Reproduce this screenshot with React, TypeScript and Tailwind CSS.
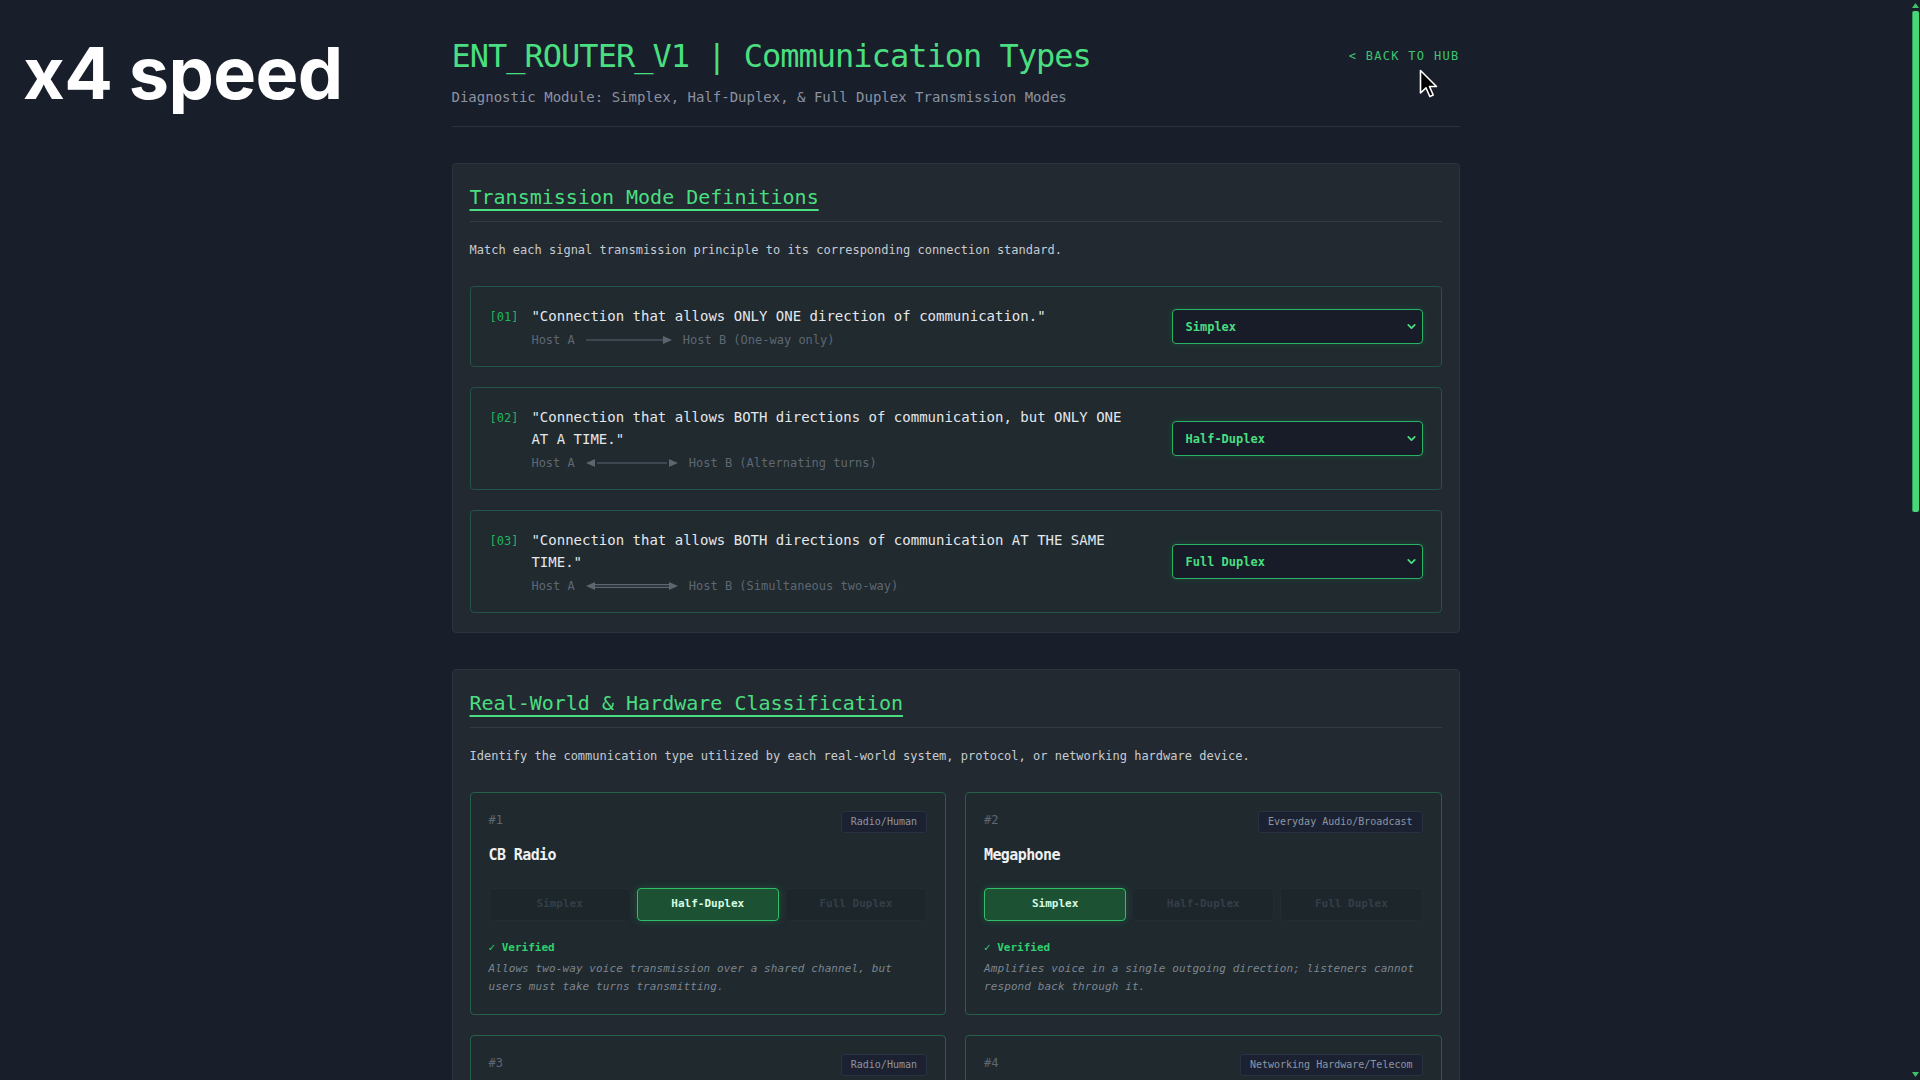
import { ChevronDown } from "lucide-react";

type Mode = "Simplex" | "Half-Duplex" | "Full Duplex";

const MODES: Mode[] = ["Simplex", "Half-Duplex", "Full Duplex"];

type Definition = {
  id: string;
  lines: string;
  kind: "one" | "half" | "full";
  note: string;
  value: Mode;
};

const definitions: Definition[] = [
  {
    id: "01",
    lines: "\"Connection that allows ONLY ONE direction of communication.\"",
    kind: "one",
    note: "Host B (One-way only)",
    value: "Simplex",
  },
  {
    id: "02",
    lines:
      "\"Connection that allows BOTH directions of communication, but ONLY ONE AT A TIME.\"",
    kind: "half",
    note: "Host B (Alternating turns)",
    value: "Half-Duplex",
  },
  {
    id: "03",
    lines:
      "\"Connection that allows BOTH directions of communication AT THE SAME TIME.\"",
    kind: "full",
    note: "Host B (Simultaneous two-way)",
    value: "Full Duplex",
  },
];

type Device = {
  n: number;
  name: string;
  tag: string;
  picked?: Mode;
  note?: string;
};

const devices: Device[] = [
  {
    n: 1,
    name: "CB Radio",
    tag: "Radio/Human",
    picked: "Half-Duplex",
    note: "Allows two-way voice transmission over a shared channel, but users must take turns transmitting.",
  },
  {
    n: 2,
    name: "Megaphone",
    tag: "Everyday Audio/Broadcast",
    picked: "Simplex",
    note: "Amplifies voice in a single outgoing direction; listeners cannot respond back through it.",
  },
  { n: 3, name: "Walkie-Talkie", tag: "Radio/Human" },
  { n: 4, name: "Modern Ethernet Switch", tag: "Networking Hardware/Telecom" },
  { n: 5, name: "Landline Telephone Call", tag: "Everyday Audio/Broadcast" },
  { n: 6, name: "Legacy Network Hub", tag: "Networking Hardware/Telecom" },
  { n: 7, name: "Television Broadcast", tag: "Everyday Audio/Broadcast" },
  { n: 8, name: "Computer Keyboard", tag: "Peripheral/Input" },
  { n: 9, name: "Cellular Phone (VoLTE)", tag: "Radio/Human" },
  { n: 10, name: "Wi-Fi Shared Medium", tag: "Networking Hardware/Telecom" },
];

function LinkArrow({ kind }: { kind: Definition["kind"] }) {
  if (kind === "one") {
    return (
      <svg width="86" height="10" viewBox="0 0 86 10" className="shrink-0">
        <line x1="0" y1="5" x2="78" y2="5" stroke="#5d6570" strokeWidth="1.2" />
        <polygon points="77,1 86,5 77,9" fill="#5d6570" />
      </svg>
    );
  }
  if (kind === "half") {
    return (
      <svg width="92" height="10" viewBox="0 0 92 10" className="shrink-0">
        <polygon points="9,1 0,5 9,9" fill="#5d6570" />
        <line x1="11" y1="5" x2="81" y2="5" stroke="#5d6570" strokeWidth="1.2" />
        <polygon points="83,1 92,5 83,9" fill="#5d6570" />
      </svg>
    );
  }
  return (
    <svg width="92" height="10" viewBox="0 0 92 10" className="shrink-0">
      <polygon points="9,1 0,5 9,9" fill="#5d6570" />
      <line x1="9" y1="3.6" x2="83" y2="3.6" stroke="#5d6570" strokeWidth="1.3" />
      <line x1="9" y1="6.4" x2="83" y2="6.4" stroke="#5d6570" strokeWidth="1.3" />
      <polygon points="83,1 92,5 83,9" fill="#5d6570" />
    </svg>
  );
}

function ModeSelect({ value }: { value: Mode }) {
  return (
    <div className="flex h-[35px] w-[251px] shrink-0 items-center justify-between rounded-[4px] border border-[#27b463] bg-[#171c28] pl-[13px] pr-[4px] shadow-[0_0_6px_rgba(34,197,94,0.18)]">
      <span className="text-[12px] font-bold text-[#4ade80]">{value}</span>
      <ChevronDown size={13} strokeWidth={3.2} color="#4ade80" />
    </div>
  );
}

function SectionHeading({ children }: { children: string }) {
  return (
    <div className="border-b border-[#323a44] pb-[10px]">
      <h2 className="text-[20px] leading-[28px] text-[#4ade80] underline decoration-2 underline-offset-[5px]">
        {children}
      </h2>
    </div>
  );
}

function DeviceCard({ d }: { d: Device }) {
  const answered = Boolean(d.picked);
  return (
    <div className="rounded-[4px] border border-[#26604a] bg-[#1f292e] px-[18px] pb-[18px] pt-[18px]">
      <div className="flex items-start justify-between">
        <span className="pt-[1px] text-[12px] leading-[16px] text-[#5f6773]">#{d.n}</span>
        <span className="rounded-[3px] border border-[#2a3242] bg-[#1b2130] px-[9px] py-[3px] text-[10px] leading-[14px] text-[#8d95a3]">
          {d.tag}
        </span>
      </div>
      <div className="mt-[12px] text-[15px] font-bold leading-[20px] tracking-[-0.6px] text-[#eef0f2]">
        {d.name}
      </div>
      <div className="mt-[23px] grid grid-cols-3 gap-[6px]">
        {MODES.map((m) => {
          const active = d.picked === m;
          const cls = active
            ? "border-[#2fbf68] bg-[#1c5233] text-[#d6fbe3] shadow-[0_0_8px_rgba(34,197,94,0.25)]"
            : answered
              ? "border-[#232c34] bg-[#1d262b] text-[#343e48]"
              : "border-[#2d3641] bg-[#1b2229] text-[#8a93a0]";
          return (
            <div
              key={m}
              className={`flex h-[33px] items-center justify-center rounded-[4px] border text-[11px] font-bold ${cls}`}
            >
              {m}
            </div>
          );
        })}
      </div>
      {answered ? (
        <>
          <div className="mt-[19px] text-[11px] font-bold leading-[16px] text-[#2fd16f]">✓ Verified</div>
          <p className="mt-[4px] text-[11px] italic leading-[18px] tracking-[0.1px] text-[#7d8590]">
            {d.note}
          </p>
        </>
      ) : (
        <div className="mt-[19px] text-[11px] leading-[16px] text-[#5f6773]">Awaiting classification…</div>
      )}
    </div>
  );
}

/* Slim green page scrollbar pinned to the right edge */
function ScrollRail() {
  return (
    <div className="pointer-events-none fixed right-0 top-0 flex h-screen w-[9px] flex-col items-center bg-[#191e2b]">
      <svg width="7" height="5" viewBox="0 0 7 5" className="mt-[3px]">
        <polygon points="3.5,0 7,5 0,5" fill="#3fbf6a" />
      </svg>
      <div className="mt-[3px] h-[501px] w-[7px] rounded-[2px] border-l border-[#2f9d55] bg-[#47d77a]" />
      <div className="flex-1" />
      <svg width="7" height="5" viewBox="0 0 7 5" className="mb-[3px]">
        <polygon points="0,0 7,0 3.5,5" fill="#3fbf6a" />
      </svg>
    </div>
  );
}

export default function App() {
  return (
    <div className="relative min-h-screen w-full bg-[#191e2b] pr-[9px] font-['DejaVu_Sans_Mono',monospace]">
      <div className="absolute left-[23px] top-[37px] font-['Inter',sans-serif] text-[72px] font-bold leading-[72px] tracking-[-0.6px] text-white">
        x4 speed
      </div>

      <main className="mx-auto w-[1008px] pb-[80px] pt-[36px]">
        <header className="border-b border-[#2a3140] pb-[19px]">
          <div className="flex items-start justify-between">
            <h1 className="text-[32px] leading-[40px] tracking-[-1px] text-[#4ade80]">
              ENT_ROUTER_V1 | Communication Types
            </h1>
            <a className="mt-[12px] text-[12px] leading-[16px] tracking-[1.3px] text-[#3fc46f]">
              &lt; BACK TO HUB
            </a>
          </div>
          <p className="mt-[11px] text-[14px] leading-[20px] text-[#8b93a1]">
            Diagnostic Module: Simplex, Half-Duplex, &amp; Full Duplex Transmission Modes
          </p>
        </header>

        <section className="mt-[36px] rounded-[4px] border border-[#2c333d] bg-[#222930] px-[17px] pb-[19px] pt-[19px]">
          <SectionHeading>Transmission Mode Definitions</SectionHeading>
          <p className="mt-[20px] text-[12px] leading-[16px] text-[#c6cbd2]">
            Match each signal transmission principle to its corresponding connection standard.
          </p>
          <div className="mt-[28px] flex flex-col gap-[20px]">
            {definitions.map((d) => (
              <div
                key={d.id}
                className="flex items-center gap-[26px] rounded-[4px] border border-[#22544a] bg-[#202a2f] pb-[18px] pl-[19px] pr-[18px] pt-[18px]"
              >
                <div className="flex flex-1 items-start gap-[13px]">
                  <span className="pt-[4px] text-[12px] leading-[16px] text-[#22b45e]">[{d.id}]</span>
                  <div className="w-[606px]">
                    <p className="text-[14px] leading-[22px] text-[#e4e7eb]">{d.lines}</p>
                    <div className="mt-[5px] flex items-center gap-[11px] text-[12px] leading-[16px] text-[#5f6773]">
                      <span>Host A</span>
                      <LinkArrow kind={d.kind} />
                      <span>{d.note}</span>
                    </div>
                  </div>
                </div>
                <ModeSelect value={d.value} />
              </div>
            ))}
          </div>
        </section>

        <section className="mt-[36px] rounded-[4px] border border-[#2c333d] bg-[#222930] px-[17px] pb-[19px] pt-[19px]">
          <SectionHeading>Real-World &amp; Hardware Classification</SectionHeading>
          <p className="mt-[20px] text-[12px] leading-[16px] text-[#c6cbd2]">
            Identify the communication type utilized by each real-world system, protocol, or networking hardware device.
          </p>
          <div className="mt-[28px] grid grid-cols-2 gap-x-[19px] gap-y-[20px]">
            {devices.map((d) => (
              <DeviceCard key={d.n} d={d} />
            ))}
          </div>
        </section>

        <section className="mt-[36px] flex items-center justify-between rounded-[4px] border border-[#2c333d] bg-[#222930] px-[18px] py-[20px]">
          <span className="text-[12px] text-[#8b93a1]">DIAGNOSTIC PROGRESS: 5 / 13 VERIFIED</span>
          <span className="rounded-[4px] border border-[#27b463] px-[16px] py-[8px] text-[12px] font-bold text-[#4ade80]">
            RUN FULL DIAGNOSTIC
          </span>
        </section>
      </main>

      <ScrollRail />

      {/* pointer */}
      <svg
        className="pointer-events-none absolute left-[1419px] top-[69px]"
        width="20"
        height="30"
        viewBox="0 0 20 30"
      >
        <path
          d="M1.5 1.5 L1.5 24 L7 18.8 L10.8 27.5 L14.2 26 L10.5 17.5 L17.5 17.5 Z"
          fill="#000"
          stroke="#fff"
          strokeWidth="1.6"
          strokeLinejoin="round"
        />
      </svg>
    </div>
  );
}
